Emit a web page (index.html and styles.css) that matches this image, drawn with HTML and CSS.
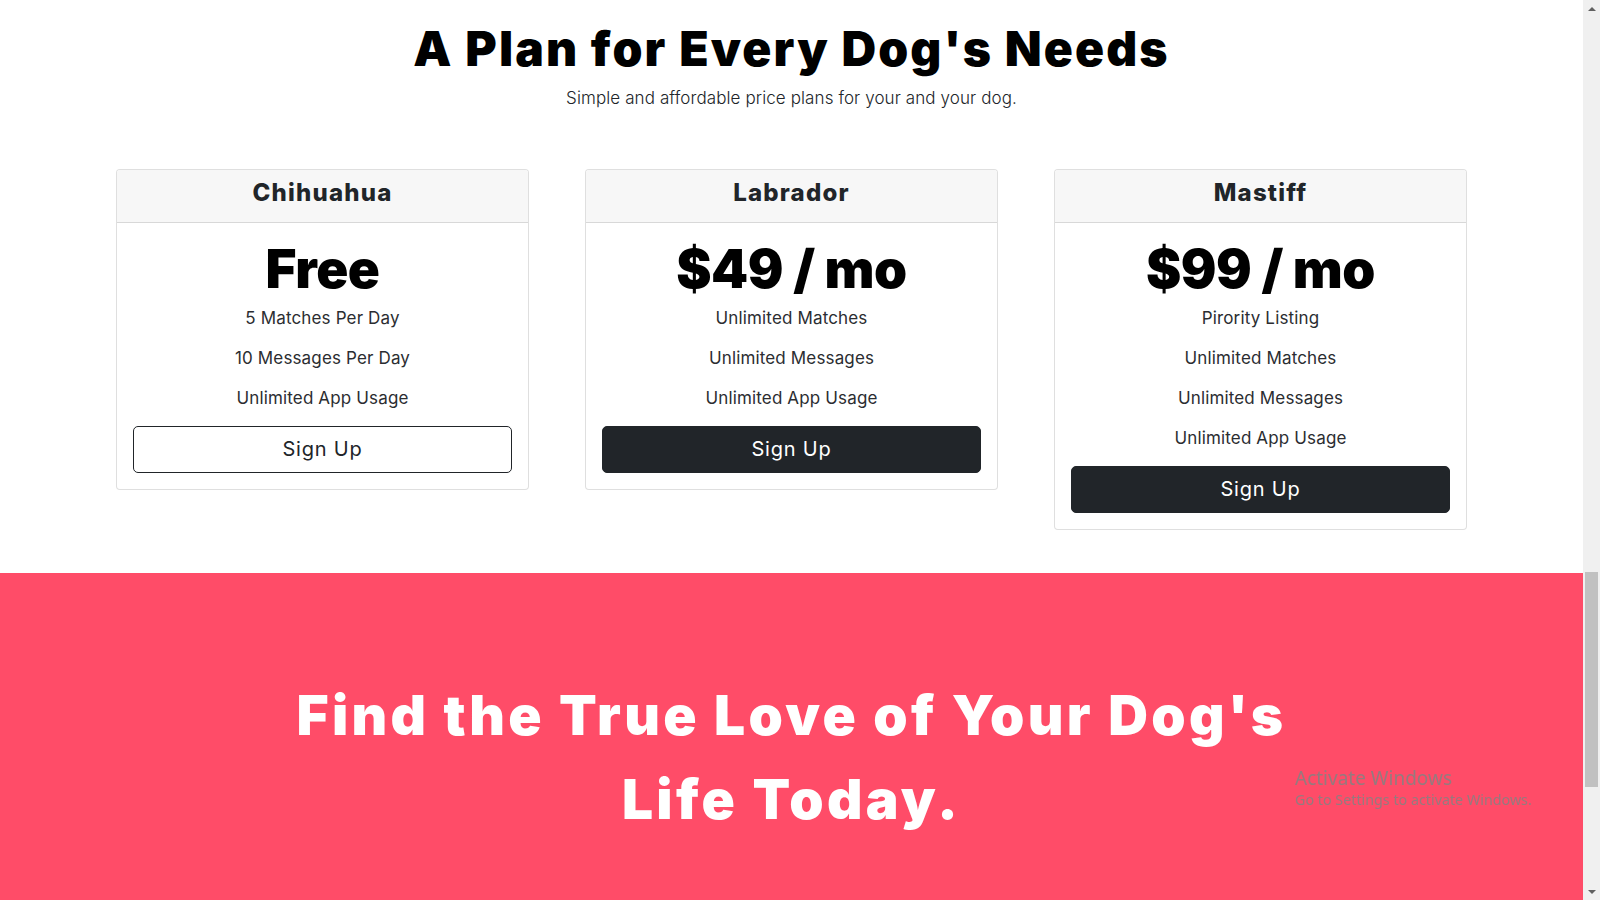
FILE: index.html
```html
<!DOCTYPE html>
<html lang="en">
<head>
<meta charset="utf-8">
<title>TinDog Pricing</title>
<link rel="stylesheet" href="styles.css">
</head>
<body>
<div class="window">
  <main class="page">
    <section class="pricing">
      <h2 class="section-heading">A Plan for Every Dog's Needs</h2>
      <p class="lead">Simple and affordable price plans for your and your dog.</p>
      <div class="plans">
        <div class="plan-col">
          <div class="card">
            <div class="card-header"><h3>Chihuahua</h3></div>
            <div class="card-body">
              <h2 class="price">Free</h2>
              <ul class="features">
                <li>5 Matches Per Day</li>
                <li>10 Messages Per Day</li>
                <li>Unlimited App Usage</li>
              </ul>
              <button class="btn btn-outline" type="button">Sign Up</button>
            </div>
          </div>
        </div>
        <div class="plan-col">
          <div class="card">
            <div class="card-header"><h3>Labrador</h3></div>
            <div class="card-body">
              <h2 class="price">$49 / mo</h2>
              <ul class="features">
                <li>Unlimited Matches</li>
                <li>Unlimited Messages</li>
                <li>Unlimited App Usage</li>
              </ul>
              <button class="btn btn-dark" type="button">Sign Up</button>
            </div>
          </div>
        </div>
        <div class="plan-col">
          <div class="card">
            <div class="card-header"><h3>Mastiff</h3></div>
            <div class="card-body">
              <h2 class="price">$99 / mo</h2>
              <ul class="features">
                <li>Pirority Listing</li>
                <li>Unlimited Matches</li>
                <li>Unlimited Messages</li>
                <li>Unlimited App Usage</li>
              </ul>
              <button class="btn btn-dark" type="button">Sign Up</button>
            </div>
          </div>
        </div>
      </div>
    </section>
    <section class="cta">
      <h3 class="big-heading">Find the True Love of Your Dog's Life Today.</h3>
    </section>
  </main>
  <div class="scrollbar" aria-hidden="true">
    <div class="sb-arrow sb-up"></div>
    <div class="sb-track">
      <div class="sb-thumb"></div>
    </div>
    <div class="sb-arrow sb-down"></div>
  </div>
</div>
<div class="activate">
  <div class="activate-title">Activate Windows</div>
  <div class="activate-sub">Go to Settings to activate Windows.</div>
</div>
</body>
</html>
```
FILE: styles.css
```css
* {
  box-sizing: border-box;
}

html, body {
  margin: 0;
  padding: 0;
  height: 900px;
  overflow: hidden;
  background: #fff;
}

body {
  font-family: "Inter", "Noto Sans", sans-serif;
  color: #212529;
}

.window {
  display: flex;
  height: 900px;
}

.page {
  flex: 1;
  min-width: 0;
  display: flex;
  flex-direction: column;
  overflow: hidden;
}

/* ---------- pricing ---------- */
.pricing {
  padding: 13px 88px 43px;
  text-align: center;
}

.section-heading {
  margin: 0;
  font-family: "Inter", sans-serif;
  font-weight: 900;
  font-size: 48px;
  line-height: 72px;
  letter-spacing: 2.1px;
  color: #000;
}

.lead {
  margin: 1px 0 0;
  font-size: 17px;
  font-weight: 300;
  line-height: 24px;
  letter-spacing: 0.1px;
  color: #212529;
}

.plans {
  display: flex;
  align-items: flex-start;
  margin-top: 59px;
}

.plan-col {
  flex: 1;
  padding: 0 28px;
}

.card {
  border: 1px solid rgba(0, 0, 0, 0.125);
  border-radius: 4px;
  background: #fff;
  overflow: hidden;
}

.card-header {
  height: 53px;
  padding: 9px 20px 0;
  background: #f7f7f7;
  border-bottom: 1px solid rgba(0, 0, 0, 0.125);
}

.card-header h3 {
  margin: 0;
  font-weight: 800;
  font-size: 24px;
  line-height: 28.8px;
  letter-spacing: 1.2px;
  color: #212529;
}

.card-body {
  padding: 16px;
}

.price {
  margin: -1px 0 4px;
  font-weight: 900;
  font-size: 53px;
  line-height: 63.6px;
  letter-spacing: -0.5px;
  color: #000;
}

.features {
  list-style: none;
  margin: 0 0 16px;
  padding: 0;
}

.features li {
  font-size: 17px;
  line-height: 24px;
  letter-spacing: 0.15px;
  margin-bottom: 16px;
  color: #2b2d31;
}

.features li:last-child {
  margin-bottom: 0;
}

.btn {
  display: block;
  width: 100%;
  height: 47px;
  margin: 0;
  padding: 0 16px;
  font-family: "Inter", sans-serif;
  font-size: 20px;
  font-weight: 400;
  letter-spacing: 0.8px;
  line-height: 45px;
  border-radius: 5px;
  border: 1px solid #212529;
  cursor: pointer;
}

.btn-outline {
  background: #fff;
  color: #212529;
}

.btn-dark {
  background: #212529;
  color: #fff;
}

/* ---------- call to action ---------- */
.cta {
  flex: 1;
  background: #ff4c68;
  padding: 100px 0 0;
  text-align: center;
}

.big-heading {
  max-width: 1080px;
  margin: 0 auto;
  font-weight: 900;
  font-size: 55px;
  line-height: 84px;
  letter-spacing: 3.3px;
  color: #fff;
}

/* ---------- fake scrollbar ---------- */
.scrollbar {
  width: 17px;
  flex: none;
  display: flex;
  flex-direction: column;
  background: #f0f0f0;
}

.sb-arrow {
  height: 17px;
  flex: none;
  display: flex;
  justify-content: center;
  align-items: center;
}

.sb-up::before,
.sb-down::before {
  content: "";
  width: 0;
  height: 0;
  border-left: 4px solid transparent;
  border-right: 4px solid transparent;
}

.sb-up::before {
  border-bottom: 4px solid #606060;
}

.sb-down::before {
  border-top: 4px solid #606060;
}

.sb-track {
  flex: 1;
  padding: 555px 2px 0;
}

.sb-thumb {
  height: 215px;
  background: #c1c1c1;
}

/* ---------- watermark ---------- */
.activate {
  position: fixed;
  left: 1295px;
  top: 766px;
  font-family: "Noto Sans", "Open Sans", sans-serif;
  color: rgba(130, 130, 130, 0.85);
  pointer-events: none;
}

.activate-title {
  font-size: 19px;
  line-height: 24px;
}

.activate-sub {
  font-size: 14.3px;
  line-height: 20px;
}
```
